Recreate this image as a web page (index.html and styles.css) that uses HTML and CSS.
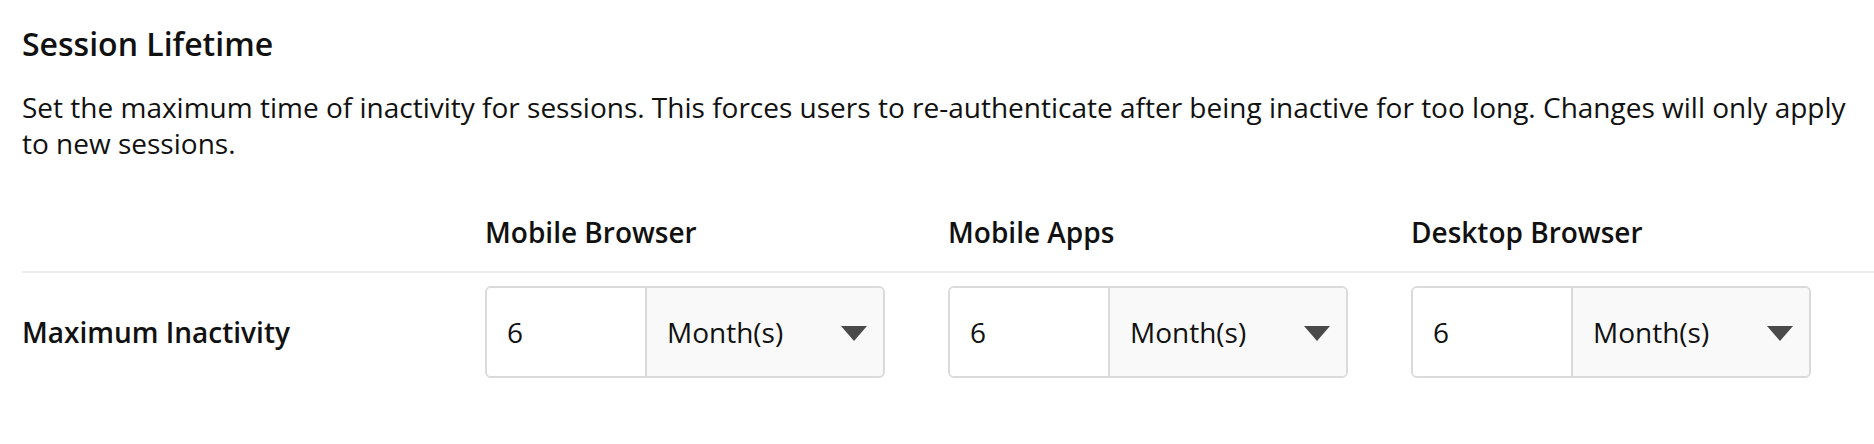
FILE: index.html
```html
<!DOCTYPE html>
<html lang="en">
<head>
    <meta charset="UTF-8">
    <meta name="viewport" content="width=device-width, initial-scale=1.0">
    <title>Session Lifetime</title>

    <link rel="stylesheet" href="styles.css">
</head>
<body>
    <div class="section">
        <h3 class="section-title">Session Lifetime</h3>
        <p class="section-desc">Set the maximum time of inactivity for sessions. This forces users to re-authenticate after being inactive for too long. Changes will only apply to new sessions.</p>

        <div class="grid grid-head">
            <div></div>
            <div class="col-title">Mobile Browser</div>
            <div class="col-title">Mobile Apps</div>
            <div class="col-title">Desktop Browser</div>
        </div>

        <div class="grid grid-row">
            <div class="row-label">Maximum Inactivity</div>

            <div class="duration">
                <input type="text" class="duration-value" value="6" inputmode="numeric">
                <div class="duration-unit">
                    <select>
                        <option>Hour(s)</option>
                        <option>Day(s)</option>
                        <option selected>Month(s)</option>
                    </select>
                    <svg class="caret" width="26" height="15" viewBox="0 0 26 15"><path d="M0 0h26L13 15z" fill="#4a4a4a"/></svg>
                </div>
            </div>

            <div class="duration">
                <input type="text" class="duration-value" value="6" inputmode="numeric">
                <div class="duration-unit">
                    <select>
                        <option>Hour(s)</option>
                        <option>Day(s)</option>
                        <option selected>Month(s)</option>
                    </select>
                    <svg class="caret" width="26" height="15" viewBox="0 0 26 15"><path d="M0 0h26L13 15z" fill="#4a4a4a"/></svg>
                </div>
            </div>

            <div class="duration">
                <input type="text" class="duration-value" value="6" inputmode="numeric">
                <div class="duration-unit">
                    <select>
                        <option>Hour(s)</option>
                        <option>Day(s)</option>
                        <option selected>Month(s)</option>
                    </select>
                    <svg class="caret" width="26" height="15" viewBox="0 0 26 15"><path d="M0 0h26L13 15z" fill="#4a4a4a"/></svg>
                </div>
            </div>
        </div>
    </div>
</body>
</html>
```

FILE: styles.css
```css
body {
    margin: 0;
    font-family: "Open Sans", sans-serif;
    color: #111;
    background-color: #fff;
}

.section {
    padding: 24px 0 0 22px;
}

.section-title {
    margin: 0;
    font-size: 32px;
    line-height: 40px;
    font-weight: 600;
}

.section-desc {
    margin: 25px 0 0 0;
    font-size: 28px;
    line-height: 36px;
}

.grid {
    display: grid;
    grid-template-columns: repeat(4, 1fr);
}

.grid-head {
    margin-top: 52px;
    padding-bottom: 20px;
    border-bottom: 2px solid #ededed;
}

.col-title {
    font-size: 28px;
    line-height: 38px;
    font-weight: 600;
}

.grid-row {
    padding-top: 13px;
    align-items: center;
}

.row-label {
    font-size: 28px;
    font-weight: 600;
}

.duration {
    display: flex;
    width: 400px;
    height: 92px;
    box-sizing: border-box;
    border: 2px solid #dadada;
    border-radius: 6px;
    overflow: hidden;
}

.duration-value {
    width: 160px;
    box-sizing: border-box;
    border: none;
    border-right: 2px solid #dadada;
    padding: 0 20px;
    font-family: inherit;
    font-size: 28px;
    color: #111;
    outline: none;
}

.duration-unit {
    flex: 1;
    position: relative;
    background-color: #f9f9f9;
}

.duration-unit select {
    appearance: none;
    width: 100%;
    height: 100%;
    border: none;
    background: transparent;
    padding: 0 20px;
    font-family: inherit;
    font-size: 28px;
    color: #111;
    outline: none;
}

.caret {
    position: absolute;
    right: 16px;
    top: 38px;
    pointer-events: none;
}
```
